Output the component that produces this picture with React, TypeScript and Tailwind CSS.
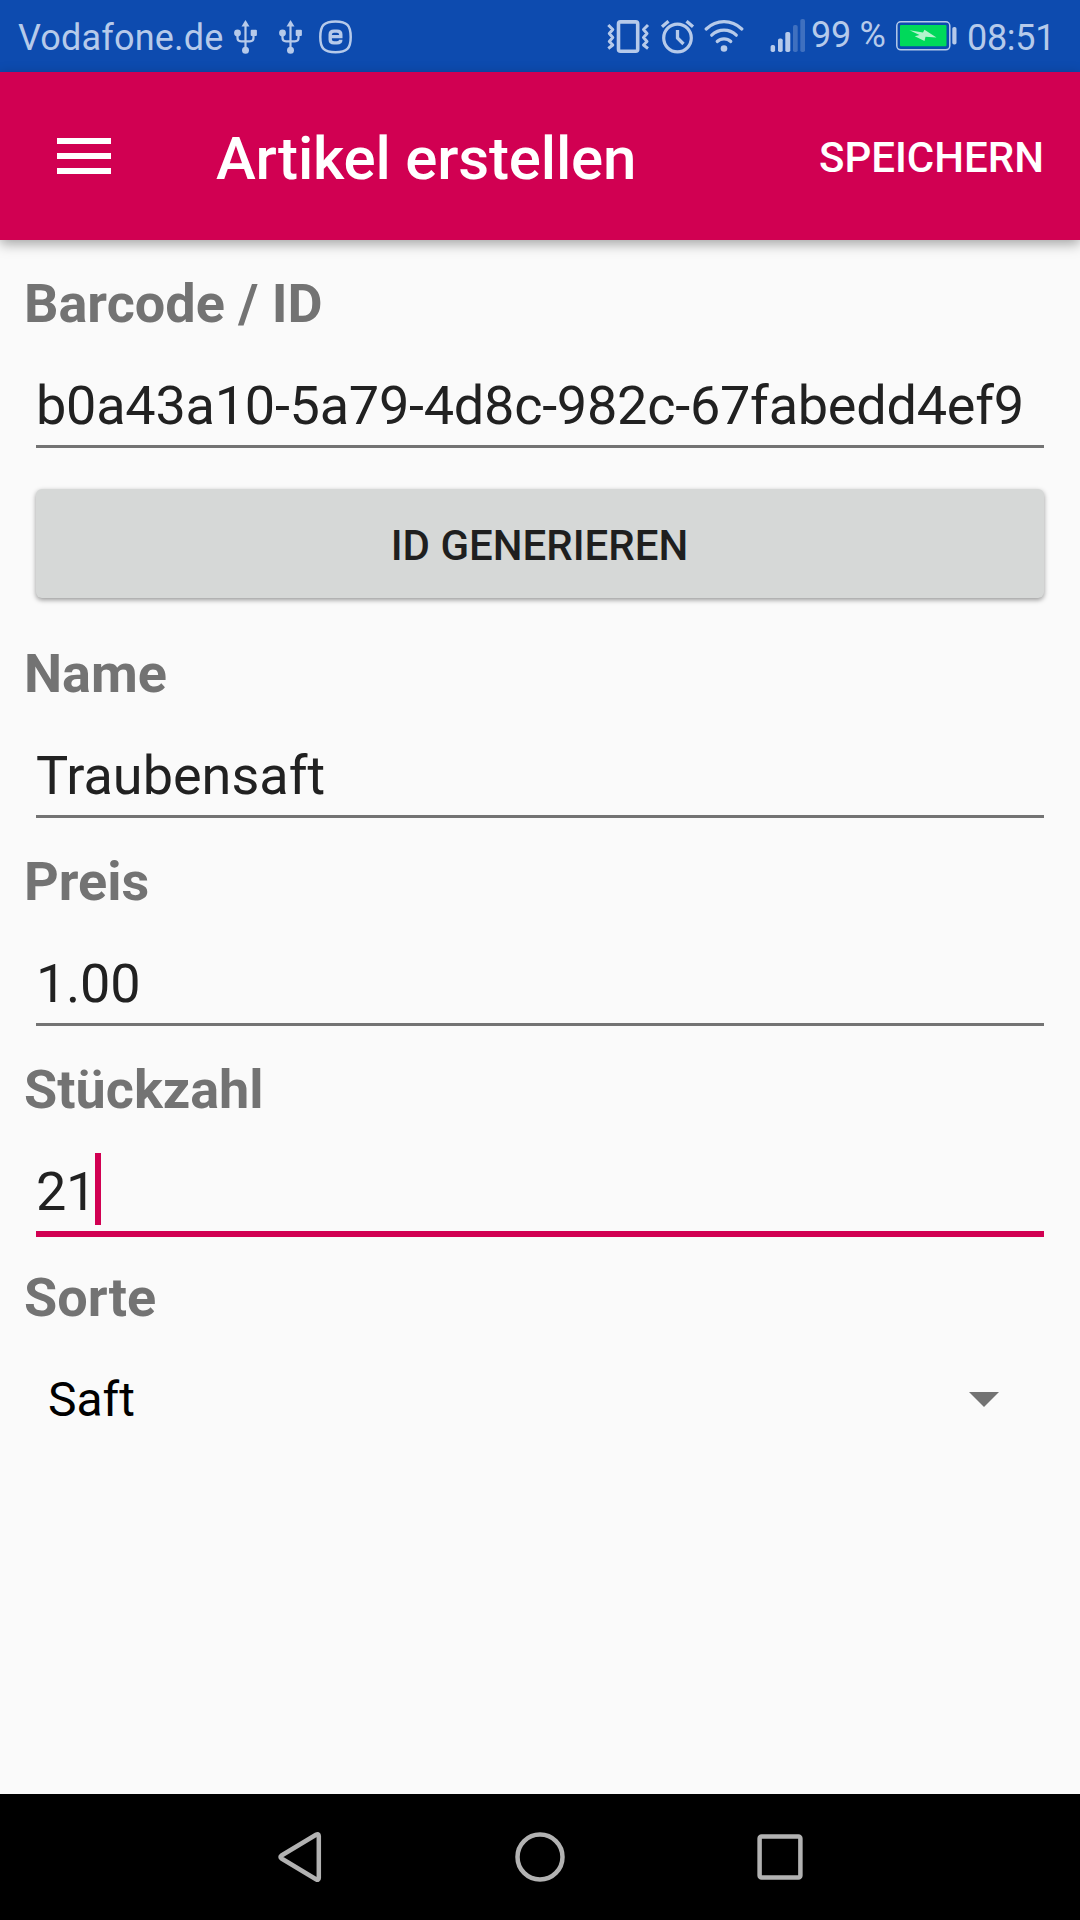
import React from "react";

const TINT = "#b6caea";

function UsbIcon() {
  return (
    <svg className="h-[34px] w-6 shrink-0" viewBox="0 0 24 34" fill="none" stroke={TINT} strokeWidth="2.200">
      <path d="M11.500 5V28M3.500 13V18Q3.500 21.300 7 21.300H16Q19.500 21.300 19.500 18V13" />
      <path d="M11.500 0L15.500 6.500H7.500Z" fill={TINT} stroke="none" />
      <circle cx="3.500" cy="13" r="3.400" fill={TINT} stroke="none" />
      <rect x="16.700" y="9.700" width="6.200" height="6.400" rx="1" fill={TINT} stroke="none" />
      <circle cx="11.500" cy="30.300" r="3.500" fill={TINT} stroke="none" />
    </svg>
  );
}

function EsetIcon() {
  return (
    <svg className="h-[34px] w-[34px] shrink-0" viewBox="0 0 34 34" fill="none" stroke={TINT}>
      <path
        d="M16.500 1.500C28 1.500 31.700 5.500 31.700 17C31.700 28.500 28 32.200 16.500 32.200C5 32.200 1.300 28.500 1.300 17C1.300 5.500 5 1.500 16.500 1.500Z"
        strokeWidth="2.500"
      />
      <path d="M11.200 16.600H21.800V14.500Q21.800 11.100 18 11.100H15Q11.200 11.100 11.200 14.500V19.500Q11.200 22.900 15 22.900H18Q21.800 22.900 21.800 19.800" strokeWidth="3.400" />
    </svg>
  );
}

function VibrateIcon() {
  return (
    <svg className="h-[34px] w-[43px] shrink-0" viewBox="0 0 43 34" fill="none" stroke={TINT}>
      <rect x="11.500" y="1.900" width="19.200" height="29.400" rx="2" strokeWidth="3.600" />
      <path d="M1.300 5L5.800 9.500L2.300 13.500L5.800 17.500L2.300 21.500L5.800 25L1.300 28.500M41 5L36.500 9.500L40 13.500L36.500 17.500L40 21.500L36.500 25L41 28.500" strokeWidth="3" strokeLinejoin="round" />
    </svg>
  );
}

function AlarmIcon() {
  return (
    <svg className="h-[34px] w-[34px] shrink-0" viewBox="0 0 34 34" fill="none" stroke={TINT} strokeWidth="3.300">
      <circle cx="16.500" cy="18" r="13.800" strokeWidth="3.200" />
      <path d="M16.500 10V18L22.500 24" strokeLinejoin="round" />
      <path d="M1 6.800L7.500 1.200M32 6.800L25.500 1.200" />
    </svg>
  );
}

function WifiIcon() {
  return (
    <svg className="h-[34px] w-10 shrink-0" viewBox="0 0 40 34" fill="none" stroke={TINT} strokeWidth="3.200" strokeLinecap="round">
      <path d="M2.200 9Q10 1.700 20 1.700Q30 1.700 37.800 9" />
      <path d="M7.700 15.200Q13 10.200 20 10.200Q27 10.200 32.300 15.200" />
      <path d="M13.200 21.500Q16 18.800 20 18.800Q24 18.800 26.800 21.500" />
      <circle cx="20" cy="28.500" r="3.300" fill={TINT} stroke="none" />
    </svg>
  );
}

function SignalIcon() {
  return (
    <svg className="h-[34px] w-9 shrink-0" viewBox="0 0 36 34" fill={TINT}>
      <rect x="0.600" y="26" width="4.500" height="7" rx="1.800" />
      <rect x="8" y="19.500" width="4.700" height="13.500" rx="1.800" />
      <rect x="15.300" y="13" width="5" height="20" rx="1.800" />
      <rect x="23" y="6" width="4.700" height="27" rx="1.800" fill="#3f70bf" />
      <rect x="30.300" y="0" width="4.700" height="33" rx="1.800" fill="#3f70bf" />
    </svg>
  );
}

function BatteryIcon() {
  return (
    <svg className="h-[30px] w-[62px] shrink-0" viewBox="0 0 62 30" fill="none">
      <rect x="0.800" y="0.800" width="53" height="28" rx="4" stroke={TINT} strokeWidth="1.500" />
      <rect x="4" y="4" width="46.500" height="21.300" rx="1" fill="#00d95a" />
      <path d="M13.500 9.200L27 11.500L28.500 8.700L40.500 16.500L29.500 15.700L28.500 20L18.800 15.200L23.500 14Z" fill="#b3f4cd" />
      <rect x="56.300" y="6" width="4.200" height="17.500" rx="1.800" fill={TINT} />
    </svg>
  );
}

function StatusBar() {
  return (
    <header className="flex h-[72px] items-start whitespace-nowrap bg-[#0d4baf] text-[36px] leading-[42px] text-[#b6caea]">
      <span className="ml-[18px] mt-[17px] w-[216px] tracking-[0.18px]">Vodafone.de</span>
      <div className="mt-[19.500px] flex gap-[21px]">
        <UsbIcon />
        <UsbIcon />
      </div>
      <div className="ml-4 mt-[19.500px]">
        <EsetIcon />
      </div>
      <div className="ml-auto mt-[19.500px] flex">
        <VibrateIcon />
        <div className="ml-[11px] flex gap-[9px]">
          <AlarmIcon />
          <WifiIcon />
        </div>
        <div className="-mt-px ml-[26px]">
          <SignalIcon />
        </div>
      </div>
      <span className="ml-[5px] mt-3.5 w-[85px] tracking-[-0.3px]">99 %</span>
      <div className="mt-[21px]">
        <BatteryIcon />
      </div>
      <span className="ml-[9px] mt-[17px] w-[113px] tracking-[-0.3px]">08:51</span>
    </header>
  );
}

function AppBar() {
  return (
    <div className="flex h-[168px] items-start bg-[#d10052] text-white shadow-[0_4px_12px_rgba(0,0,0,0.35)]">
      <button className="ml-[57px] mt-[66px] flex w-[54px] flex-col gap-[9px]" aria-label="Menü">
        <span className="h-1.5 w-full bg-white" />
        <span className="h-1.5 w-full bg-white" />
        <span className="h-1.5 w-full bg-white" />
      </button>
      <h1 className="ml-[105px] mt-[51px] text-[60px] font-medium leading-[72px] tracking-[-0.18px]">Artikel erstellen</h1>
      <button className="ml-auto mr-9 mt-[58px] text-[42px] font-medium leading-[56px]">SPEICHERN</button>
    </div>
  );
}

function Label({ children }: { children: React.ReactNode }) {
  return <div className="h-[72px] pl-6 text-[54px] font-bold leading-[72px] text-[#737373]">{children}</div>;
}

type FieldProps = { label: string; value: string; numeric?: boolean; focused?: boolean };

function Field({ label, value, numeric = false, focused = false }: FieldProps) {
  return (
    <div className="h-[208px]">
      <Label>{label}</Label>
      <div className="mx-9 mt-[30px] h-[75px]">
        <div className="flex h-[72px] items-start text-[54px] leading-[72px] text-[#212121]">
          <span className={numeric ? "tracking-[-0.24px]" : "tracking-normal"}>{value}</span>
          {focused && <span className="-ml-px -mt-[3px] h-[72px] w-1.5 bg-[#d10052]" />}
        </div>
      </div>
      <div className={focused ? "mx-9 h-1.5 bg-[#d10052]" : "mx-9 h-[3px] bg-[#737373]"} />
    </div>
  );
}

function NavBar() {
  return (
    <nav className="flex h-[126px] items-center justify-center gap-[180px] bg-black">
      <svg className="h-[60px] w-[60px]" viewBox="0 0 60 60" fill="none" stroke="#b2b2b2" strokeWidth="4.500" strokeLinejoin="round">
        <path d="M11.500 28.500L46 7.800Q48.800 6.200 48.800 9V51Q48.800 53.800 46 52.200L11.500 31.500Q9.500 30 11.500 28.500Z" />
      </svg>
      <svg className="h-[60px] w-[60px]" viewBox="0 0 60 60" fill="none" stroke="#b2b2b2" strokeWidth="4.500">
        <circle cx="30" cy="30" r="22.500" />
      </svg>
      <svg className="h-[60px] w-[60px]" viewBox="0 0 60 60" fill="none" stroke="#b2b2b2" strokeWidth="4.500">
        <rect x="9.600" y="9.600" width="40.800" height="40.800" rx="2" />
      </svg>
    </nav>
  );
}

export default function App() {
  return (
    <div className="flex h-[1920px] w-[1080px] flex-col overflow-hidden bg-[#fafafa] font-['Roboto',sans-serif]">
      <StatusBar />
      <AppBar />
      <main className="flex flex-1 flex-col pt-7">
        <Field label="Barcode / ID" value="b0a43a10-5a79-4d8c-982c-67fabedd4ef9" numeric />
        <button className="mx-9 mb-10 mt-[13px] h-[109px] rounded-md bg-[#d6d8d7] pr-px pt-[5px] text-[42px] font-medium leading-[56px] text-[#1f1f1f] shadow-[0_2px_5px_rgba(0,0,0,0.4)]">
          ID GENERIEREN
        </button>
        <Field label="Name" value="Traubensaft" />
        <Field label="Preis" value="1.00" numeric />
        <Field label="Stückzahl" value="21" numeric focused />
        <Label>Sorte</Label>
        <div className="mt-[34px] flex h-16 items-start justify-between pl-12 pr-[81px] text-[48px] leading-[64px] text-black">
          <span>Saft</span>
          <svg className="mt-6 h-[15px] w-[30px]" viewBox="0 0 30 15" fill="#737373">
            <path d="M0 0H30L15 15Z" />
          </svg>
        </div>
      </main>
      <NavBar />
    </div>
  );
}
